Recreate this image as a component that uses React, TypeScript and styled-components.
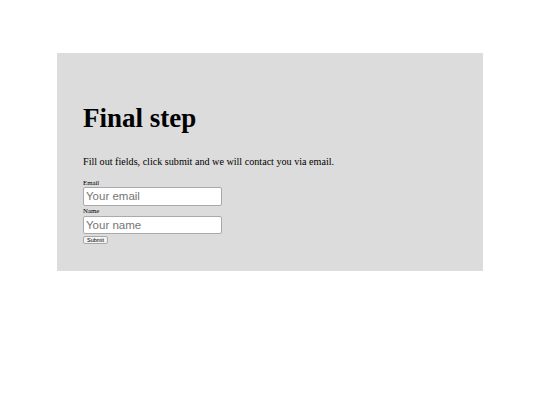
import React from "react";
import styled, { createGlobalStyle } from "styled-components";

const GlobalStyle = createGlobalStyle`
  html, body {
    margin: 0;
    padding: 0;
    background: #ffffff;
  }
  body {
    font-family: "Liberation Serif", "Times New Roman", serif;
    color: #000000;
  }
`;

const Page = styled.div`
  padding: 53px 0 0 57px;
`;

const Card = styled.section`
  box-sizing: border-box;
  width: 426px;
  height: 218px;
  background: #dcdcdc;
  padding: 50px 26px 0 26px;
`;

const Title = styled.h1`
  margin: 0;
  font-family: "Liberation Serif", "Times New Roman", serif;
  font-weight: 700;
  font-size: 27px;
  line-height: 31px;
`;

const Intro = styled.p`
  margin: 22px 0 0 0;
  font-size: 10.15px;
  line-height: 12px;
`;

const Form = styled.form`
  display: flex;
  flex-direction: column;
  align-items: flex-start;
  margin-top: 10.5px;
`;

const Label = styled.label<{ $gap?: number }>`
  display: block;
  font-family: "Liberation Serif", "Times New Roman", serif;
  font-size: 6.8px;
  line-height: 8.5px;
  height: 8.5px;
  margin-top: ${(p) => p.$gap ?? 0}px;
`;

const Field = styled.input`
  box-sizing: border-box;
  width: 139px;
  height: 18.5px;
  margin: 0;
  padding: 0 2px;
  border: 1px solid #a9a9a9;
  border-radius: 2px;
  background: #ffffff;
  font-family: "Liberation Sans", Arial, sans-serif;
  font-size: 11.5px;
  color: #000000;
  outline: none;

  &::placeholder {
    color: #757575;
  }
`;

const SubmitButton = styled.button`
  box-sizing: border-box;
  margin-top: 2px;
  height: 8px;
  padding: 0 3px;
  border: 1px solid #a9a9a9;
  border-radius: 2px;
  background: #f3f3f3;
  font-family: "Liberation Sans", Arial, sans-serif;
  font-size: 5.5px;
  line-height: 6px;
  color: #000000;
`;

export default function App() {
  return (
    <>
      <GlobalStyle />
      <Page>
        <Card>
          <Title>Final step</Title>
          <Intro>Fill out fields, click submit and we will contact you via email.</Intro>
          <Form onSubmit={(e) => e.preventDefault()}>
            <Label htmlFor="email">Email</Label>
            <Field id="email" type="email" placeholder="Your email" />
            <Label htmlFor="name" $gap={1.7}>
              Name
            </Label>
            <Field id="name" type="text" placeholder="Your name" />
            <SubmitButton type="submit">Submit</SubmitButton>
          </Form>
        </Card>
      </Page>
    </>
  );
}
